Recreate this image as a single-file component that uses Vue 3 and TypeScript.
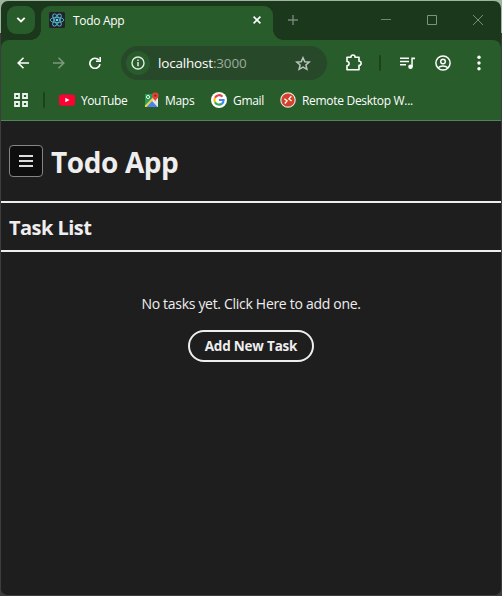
<script setup lang="ts">
interface Bookmark {
  id: string
  label: string
}

const bookmarks: Bookmark[] = [
  { id: 'youtube', label: 'YouTube' },
  { id: 'maps', label: 'Maps' },
  { id: 'gmail', label: 'Gmail' },
  { id: 'remote', label: 'Remote Desktop W...' },
]
const tasks: string[] = []
</script>

<template>
  <div class="desktop">
    <div class="window">
      <div class="tabstrip">
        <button class="tab-search" aria-label="Search tabs">
          <svg width="10" height="8" viewBox="0 0 10 8"><path d="M1.3 1.8 5 5.5l3.7-3.7" fill="none" stroke="#fff" stroke-width="1.9" /></svg>
        </button>
        <div class="tab">
          <svg class="favicon" width="16" height="16" viewBox="0 0 16 16">
            <rect width="16" height="16" rx="1.5" fill="#20232a" />
            <g fill="none" stroke="#55b5cf" stroke-width=".9">
              <ellipse cx="8" cy="8" rx="6.8" ry="2.6" />
              <ellipse cx="8" cy="8" rx="6.8" ry="2.6" transform="rotate(60 8 8)" />
              <ellipse cx="8" cy="8" rx="6.8" ry="2.6" transform="rotate(120 8 8)" />
            </g>
            <circle cx="8" cy="8" r="1.3" fill="#61dafb" />
          </svg>
          <span class="tab-title">Todo App</span>
          <svg class="tab-close" width="8" height="8" viewBox="0 0 8 8"><path d="M.6.6l6.8 6.8M7.4.6.6 7.4" stroke="#fff" stroke-width="1.6" /></svg>
        </div>
        <svg class="new-tab" width="10" height="10" viewBox="0 0 10 10"><path d="M5 0v10M0 5h10" stroke="#76877a" stroke-width="1.4" /></svg>
        <div class="controls">
          <svg width="10" height="10" viewBox="0 0 10 10"><path d="M0 4.5h10" stroke="#6f8570" /></svg>
          <svg width="10" height="10" viewBox="0 0 10 10"><path d="M.5.5h9v9h-9z" fill="none" stroke="#7f9280" /></svg>
          <svg width="10" height="10" viewBox="0 0 10 10"><path d="M0 0l10 10M10 0 0 10" stroke="#788c79" /></svg>
        </div>
      </div>

      <div class="chrome">
        <div class="toolbar">
          <svg class="nav" width="12" height="12" viewBox="0 0 12 12"><path d="M12 6H1.3M6.5.7 1.2 6l5.3 5.3" fill="none" stroke="#fff" stroke-width="1.6" /></svg>
          <svg class="nav forward" width="12" height="12" viewBox="0 0 12 12"><path d="M0 6h10.7M5.5.7 10.8 6l-5.3 5.3" fill="none" stroke="#7c987d" stroke-width="1.6" /></svg>
          <svg class="nav reload" width="12" height="12" viewBox="0 0 12 12"><path d="M10 3.2A5.1 5.1 0 1 0 11 7.2" fill="none" stroke="#fff" stroke-width="1.7" /><path d="M12 0v5H7V3.4h3.4V0z" fill="#fff" /></svg>
          <div class="omnibox">
            <span class="site-info">
              <svg width="14" height="14" viewBox="0 0 14 14"><circle cx="7" cy="7" r="6" fill="none" stroke="#e4ebe4" stroke-width="1.4" /><path d="M7 6v4.3M7 3.5v1.5" stroke="#e4ebe4" stroke-width="1.5" /></svg>
            </span>
            <span class="url">localhost<span class="port">:3000</span></span>
            <svg class="star" width="16" height="15" viewBox="0 0 16 15"><path d="M8 1.7l1.8 4 4.4.4-3.3 2.9 1 4.3L8 11l-3.9 2.3 1-4.3-3.3-2.9 4.4-.4z" fill="none" stroke="#bac5ba" stroke-width="1.5" /></svg>
          </div>
          <svg class="extensions" width="16" height="17" viewBox="0 0 16 17"><path d="M1 3.2h4V2.7a2 1.7 0 0 1 4 0v.5h4v4h.5a1.6 2 0 0 1 0 4H13v4.6H1v-4.1a2.1 2.1 0 0 0 0-4.2z" fill="none" stroke="#fff" stroke-width="1.6" stroke-linejoin="round" /></svg>
          <span class="divider"></span>
          <svg class="media" width="16" height="13" viewBox="0 0 16 13"><path d="M0 1.3h9M0 4.5h9M0 7.7h6" stroke="#fff" stroke-width="1.6" /><path d="M11.3.5H15v1.8h-2.2v7.5h-1.5z" fill="#fff" /><circle cx="10.5" cy="9.8" r="2.3" fill="#fff" /></svg>
          <svg class="profile" width="16" height="16" viewBox="0 0 16 16"><g fill="none" stroke="#fff" stroke-width="1.5"><circle cx="8" cy="8" r="7.1" /><circle cx="8" cy="6.5" r="2.3" /><path d="M3.1 12.8c2.7-2.4 7.1-2.4 9.8 0" /></g></svg>
          <svg class="more" width="4" height="16" viewBox="0 0 4 16" fill="#fff"><circle cx="2" cy="2.2" r="1.7" /><circle cx="2" cy="8" r="1.7" /><circle cx="2" cy="13.8" r="1.7" /></svg>
        </div>

        <div class="bookmarks">
          <svg class="apps" width="14" height="14" viewBox="0 0 14 14"><path d="M1 1h4v4H1zM9 1h4v4H9zM1 9h4v4H1zM9 9h4v4H9z" fill="none" stroke="#eef3ee" stroke-width="1.8" /></svg>
          <span class="divider"></span>
          <a v-for="mark in bookmarks" :key="mark.id" class="bookmark" :class="mark.id">
            <svg v-if="mark.id === 'youtube'" width="16" height="16" viewBox="0 0 16 16"><rect y="2.4" width="16" height="11.3" rx="2.6" fill="#ff0033" /><path d="M6.3 5.7v4.6l4.2-2.3z" fill="#fff" /></svg>
            <svg v-else-if="mark.id === 'maps'" width="16" height="16" viewBox="0 0 16 16">
              <path d="M1 2h13v13H1z" fill="#e9ece7" /><path d="M1 2h9v4L1 14.8z" fill="#299b56" /><path d="m1 13.5 8-8.2 2 2L3 15H1z" fill="#f5d14a" /><path d="m8 8.7 2-1.8 4 4.2V15z" fill="#e4e7e5" /><path d="m2.5 15 5.6-6 5.6 6z" fill="#4c83eb" />
              <circle cx="4" cy="5" r="1.6" fill="none" stroke="#e8f1e8" />
              <path d="M11.2 9.6C10.8 7.5 8 6.2 8 3.8a3.3 3.3 0 0 1 6.6 0c0 2.4-2.9 3.7-3.4 5.8z" fill="#e94335" /><circle cx="11.3" cy="3.6" r="1.2" fill="#9d2521" />
            </svg>
            <svg v-else-if="mark.id === 'gmail'" width="16" height="16" viewBox="0 0 16 16">
              <circle cx="8" cy="8" r="8" fill="#fff" /><g fill="none" stroke-width="2.1"><path d="M11.5 4.6A4.6 4.6 0 0 0 4 5.8" stroke="#ea4335" /><path d="M4 5.8a4.6 4.6 0 0 0 0 4.5" stroke="#fbbc05" /><path d="M4 10.2a4.6 4.6 0 0 0 7 1.4" stroke="#34a853" /><path d="M8 8h4.6c0 1.5-.6 2.8-1.6 3.6" stroke="#4285f4" /></g>
            </svg>
            <svg v-else width="16" height="16" viewBox="0 0 16 16"><circle cx="8" cy="8" r="7.2" fill="#d44329" stroke="#e7dfd9" stroke-width="1.2" /><path d="m4.4 6.8 2.7 2.1-2.3 2.6M11.3 4.3 8.9 6.9l2.7 2.2" fill="none" stroke="#fff" stroke-width="1.3" /></svg>
            <span>{{ mark.label }}</span>
          </a>
        </div>
      </div>

      <main class="page">
        <header class="app-header">
          <button class="menu" aria-label="Menu"><span></span><span></span><span></span></button>
          <h1>Todo App</h1>
        </header>
        <h2>Task List</h2>
        <section v-if="tasks.length === 0" class="empty">
          <p>No tasks yet. Click Here to add one.</p>
          <button class="add">Add New Task</button>
        </section>
      </main>
    </div>
  </div>
</template>

<style>
body {
  margin: 0;
}
</style>

<style scoped>
* {
  box-sizing: border-box;
}
button {
  margin: 0;
  padding: 0;
  border: 0;
  font-family: inherit;
}
svg {
  display: block;
  flex: none;
}
.desktop {
  height: 596px;
  width: 502px;
  padding: 1px 1px 0;
  background: linear-gradient(#9fb4a1 0 33px, #3d3d3d 33px);
  font-family: 'Open Sans', 'Noto Sans', sans-serif;
  overflow: hidden;
}
.window {
  height: 595px;
  border-radius: 7px;
  border-bottom: 1px solid #3d3d3d;
  background: #1b371c;
  overflow: hidden;
  display: flex;
  flex-direction: column;
}
.tabstrip {
  height: 39px;
  flex: none;
  display: flex;
  padding: 5px 18px 0 6px;
}
.tab-search {
  width: 28px;
  height: 28px;
  border-radius: 9px;
  background: #285c2b;
  display: grid;
  place-items: center;
}
.tab {
  position: relative;
  width: 232px;
  height: 34px;
  margin-left: 6px;
  padding: 0 12px 6px 8px;
  border-radius: 9px 9px 0 0;
  background: #285c2b;
  display: flex;
  align-items: center;
  color: #fff;
  font-size: 12px;
}
.tab::before,
.tab::after {
  content: '';
  position: absolute;
  bottom: 0;
  width: 10px;
  height: 10px;
}
.tab::before {
  left: -10px;
  background: radial-gradient(circle at 0 0, transparent 9.5px, #285c2b 10px);
}
.tab::after {
  right: -10px;
  background: radial-gradient(circle at 100% 0, transparent 9.5px, #285c2b 10px);
}
.tab-title {
  margin-left: 8px;
  letter-spacing: -0.3px;
}
.tab-close {
  margin-left: auto;
}
.new-tab {
  margin: 9px 0 0 15px;
}
.controls {
  margin: 9px 0 0 auto;
  display: flex;
  gap: 36px;
}
.chrome {
  height: 81px;
  flex: none;
  border-radius: 8px 8px 0 0;
  border-bottom: 1px solid #548457;
  background: #285c2b;
}
.toolbar {
  height: 46px;
  display: flex;
  align-items: center;
  padding-left: 16px;
}
.forward,
.reload {
  margin-left: 24px;
}
.omnibox {
  width: 206px;
  height: 34px;
  margin-left: 20px;
  padding: 0 16px 0 5px;
  border-radius: 17px;
  background: #28482a;
  display: flex;
  align-items: center;
}
.site-info {
  width: 24px;
  height: 24px;
  border-radius: 50%;
  background: #285c2b;
  display: grid;
  place-items: center;
}
.url {
  margin-left: 8px;
  color: #fff;
  font-size: 13.5px;
  letter-spacing: -0.18px;
}
.port {
  color: #9cab9d;
}
.star {
  margin-left: auto;
}
.extensions {
  margin: -2px 0 0 19px;
}
.divider {
  width: 2px;
  height: 16px;
  border-radius: 1px;
  background: #1b421d;
}
.toolbar .divider {
  margin-left: 17px;
}
.media {
  margin-left: 19px;
}
.profile {
  margin-left: 19px;
}
.more {
  margin-left: 26px;
}
.bookmarks {
  height: 28px;
  display: flex;
  align-items: center;
  padding-left: 13px;
}
.bookmarks .divider {
  margin: 0 14px 0 15px;
}
.bookmark {
  display: flex;
  align-items: center;
  gap: 6px;
  color: #fff;
  font-size: 12px;
  white-space: nowrap;
  letter-spacing: -0.3px;
}
.youtube {
  width: 85px;
  letter-spacing: -0.45px;
}
.maps {
  width: 67px;
  gap: 5px;
}
.gmail {
  width: 69px;
}
.page {
  flex: 1;
  background: #1e1e1e;
  color: #eee;
}
.app-header {
  height: 82px;
  border-bottom: 2px solid #eee;
  padding-left: 8px;
  display: flex;
  align-items: center;
}
.menu {
  width: 34px;
  height: 32px;
  border: 1px solid #858585;
  border-radius: 4px;
  background: #0e0e0e;
  display: flex;
  flex-direction: column;
  align-items: center;
  justify-content: center;
  gap: 3px;
}
.menu span {
  width: 14px;
  height: 2px;
  background: #ddd;
}
h1 {
  margin: 2px 0 0 8px;
  font-size: 28px;
  line-height: 38px;
  letter-spacing: -0.4px;
}
h2 {
  height: 49px;
  margin: 0;
  padding: 0 8px;
  border-bottom: 2px solid #eee;
  font-size: 20px;
  line-height: 50px;
  letter-spacing: -0.55px;
}
.empty {
  padding-top: 42px;
  display: flex;
  flex-direction: column;
  align-items: center;
}
.empty p {
  margin: 0;
  font-size: 14px;
  line-height: 20px;
  white-space: nowrap;
  letter-spacing: -0.3px;
}
.add {
  width: 126px;
  height: 32px;
  margin-top: 16px;
  border: 2px solid #eee;
  border-radius: 16px;
  background: transparent;
  color: #eee;
  font-size: 13.5px;
  font-weight: 700;
  letter-spacing: -0.2px;
  white-space: nowrap;
}
</style>
